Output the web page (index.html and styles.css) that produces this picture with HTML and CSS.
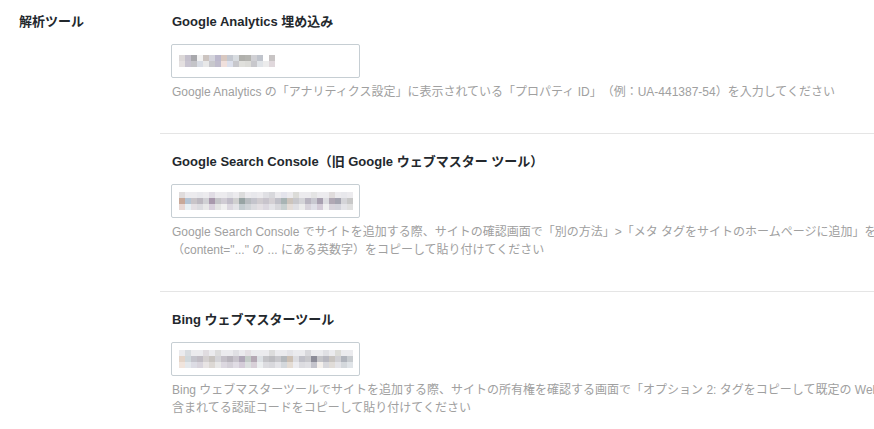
FILE: index.html
```html
<!DOCTYPE html>
<html lang="ja">
<head>
<meta charset="utf-8">
<title>解析ツール</title>
<link rel="stylesheet" href="styles.css">
</head>
<body>
<div class="row">
  <div class="row-label">解析ツール</div>
  <div class="row-body">
    <section class="field field-first">
      <h3 class="field-title">Google Analytics 埋め込み</h3>
      <div class="field-input">
        <svg width="102" height="12" viewBox="0 0 102 12" class="blur">
          <rect x="0" y="0" width="6" height="6" fill="#dcd8d8"/><rect x="6" y="0" width="6" height="6" fill="#c4c0cc"/><rect x="12" y="0" width="6" height="6" fill="#a8a8ac"/><rect x="18" y="0" width="6" height="6" fill="#f2f2f2"/><rect x="24" y="0" width="6" height="6" fill="#ccc4c0"/><rect x="30" y="0" width="6" height="6" fill="#d4d4dc"/><rect x="36" y="0" width="6" height="6" fill="#bcb8cc"/><rect x="42" y="0" width="6" height="6" fill="#d8c8c0"/><rect x="48" y="0" width="6" height="6" fill="#c4c8d0"/><rect x="54" y="0" width="6" height="6" fill="#d8dce0"/><rect x="60" y="0" width="6" height="6" fill="#b0b0ac"/><rect x="66" y="0" width="6" height="6" fill="#b4b4b0"/><rect x="72" y="0" width="6" height="6" fill="#d0d0d4"/><rect x="78" y="0" width="6" height="6" fill="#c0c4cc"/><rect x="84" y="0" width="6" height="6" fill="#ffffff"/><rect x="90" y="0" width="6" height="6" fill="#c8c4c4"/>
          <rect x="0" y="6" width="6" height="6" fill="#e4e0e0"/><rect x="6" y="6" width="6" height="6" fill="#c8c4d0"/><rect x="12" y="6" width="6" height="6" fill="#c4c4c8"/><rect x="18" y="6" width="6" height="6" fill="#d8dce4"/><rect x="24" y="6" width="6" height="6" fill="#e8e8e8"/><rect x="30" y="6" width="6" height="6" fill="#c8c8cc"/><rect x="36" y="6" width="6" height="6" fill="#c0bccc"/><rect x="42" y="6" width="6" height="6" fill="#f0e0dc"/><rect x="48" y="6" width="6" height="6" fill="#dce0ec"/><rect x="54" y="6" width="6" height="6" fill="#c8c8cc"/><rect x="60" y="6" width="6" height="6" fill="#e0e0dc"/><rect x="66" y="6" width="6" height="6" fill="#dcdcd8"/><rect x="72" y="6" width="6" height="6" fill="#c8c8cc"/><rect x="78" y="6" width="6" height="6" fill="#e0e4e8"/><rect x="84" y="6" width="6" height="6" fill="#ececec"/><rect x="90" y="6" width="6" height="6" fill="#e0d8dc"/>
        </svg>
      </div>
      <p class="field-desc">Google Analytics の「アナリティクス設定」に表示されている「プロパティ ID」（例：UA-441387-54）を入力してください</p>
    </section>
    <section class="field">
      <h3 class="field-title">Google Search Console（旧 Google ウェブマスター ツール）</h3>
      <div class="field-input">
        <svg width="174" height="18" viewBox="0 0 174 18" class="blur">
          <rect x="0" y="0" width="174" height="6" fill="#ecebee"/>
          <rect x="0" y="0" width="6" height="6" fill="#e0dcdc"/><rect x="18" y="0" width="6" height="6" fill="#e8e8ec"/><rect x="30" y="0" width="6" height="6" fill="#e0dce4"/><rect x="48" y="0" width="6" height="6" fill="#e4e4e8"/><rect x="60" y="0" width="6" height="6" fill="#dcdcdc"/><rect x="72" y="0" width="6" height="6" fill="#e8e8ec"/><rect x="84" y="0" width="6" height="6" fill="#e0e0e4"/><rect x="90" y="0" width="6" height="6" fill="#d8d8dc"/><rect x="102" y="0" width="6" height="6" fill="#e4e4ec"/><rect x="114" y="0" width="6" height="6" fill="#dcdcd8"/><rect x="132" y="0" width="6" height="6" fill="#e4e4e4"/><rect x="150" y="0" width="6" height="6" fill="#e0dcdc"/><rect x="162" y="0" width="6" height="6" fill="#e8e8ec"/>
          <rect x="0" y="6" width="6" height="6" fill="#c8a898"/><rect x="6" y="6" width="6" height="6" fill="#b4c4d4"/><rect x="12" y="6" width="6" height="6" fill="#c8c4c8"/><rect x="18" y="6" width="6" height="6" fill="#bcb8c0"/><rect x="24" y="6" width="6" height="6" fill="#d0d0d4"/><rect x="30" y="6" width="6" height="6" fill="#a898ac"/><rect x="36" y="6" width="6" height="6" fill="#c4c4c8"/><rect x="42" y="6" width="6" height="6" fill="#d0ccd4"/><rect x="48" y="6" width="6" height="6" fill="#c0bcc8"/><rect x="54" y="6" width="6" height="6" fill="#d0d0d0"/><rect x="60" y="6" width="6" height="6" fill="#98a4a4"/><rect x="66" y="6" width="6" height="6" fill="#b8bcc0"/><rect x="72" y="6" width="6" height="6" fill="#c4c4cc"/><rect x="78" y="6" width="6" height="6" fill="#d0ccd0"/><rect x="84" y="6" width="6" height="6" fill="#c8c4cc"/><rect x="90" y="6" width="6" height="6" fill="#d4d0d4"/><rect x="96" y="6" width="6" height="6" fill="#c0c0c8"/><rect x="102" y="6" width="6" height="6" fill="#a8b4b4"/><rect x="108" y="6" width="6" height="6" fill="#ccc4bc"/><rect x="114" y="6" width="6" height="6" fill="#c8c8cc"/><rect x="120" y="6" width="6" height="6" fill="#d4d4d8"/><rect x="126" y="6" width="6" height="6" fill="#b8b4c0"/><rect x="132" y="6" width="6" height="6" fill="#c8c8d0"/><rect x="138" y="6" width="6" height="6" fill="#a8a0b0"/><rect x="144" y="6" width="6" height="6" fill="#dcdce0"/><rect x="150" y="6" width="6" height="6" fill="#b0a8b4"/><rect x="156" y="6" width="6" height="6" fill="#a4a4b0"/><rect x="162" y="6" width="6" height="6" fill="#d4d4d8"/><rect x="168" y="6" width="6" height="6" fill="#c8c8c8"/>
          <rect x="0" y="12" width="6" height="6" fill="#e8d8d4"/><rect x="6" y="12" width="6" height="6" fill="#e8f0f4"/><rect x="12" y="12" width="6" height="6" fill="#e4e0e4"/><rect x="18" y="12" width="6" height="6" fill="#dcdce0"/><rect x="24" y="12" width="6" height="6" fill="#e8e8e8"/><rect x="30" y="12" width="6" height="6" fill="#d8d0dc"/><rect x="36" y="12" width="6" height="6" fill="#e4e4e4"/><rect x="42" y="12" width="6" height="6" fill="#f0f0f0"/><rect x="48" y="12" width="6" height="6" fill="#dcd8e0"/><rect x="54" y="12" width="6" height="6" fill="#e4e4e8"/><rect x="60" y="12" width="6" height="6" fill="#c4ccd0"/><rect x="66" y="12" width="6" height="6" fill="#d0d4d8"/><rect x="72" y="12" width="6" height="6" fill="#dcdce0"/><rect x="78" y="12" width="6" height="6" fill="#e4e0e4"/><rect x="84" y="12" width="6" height="6" fill="#dcd8e0"/><rect x="90" y="12" width="6" height="6" fill="#e4e4e8"/><rect x="96" y="12" width="6" height="6" fill="#d8d8dc"/><rect x="102" y="12" width="6" height="6" fill="#c8d0d0"/><rect x="108" y="12" width="6" height="6" fill="#e4ddd8"/><rect x="114" y="12" width="6" height="6" fill="#e0e0e4"/><rect x="120" y="12" width="6" height="6" fill="#ececec"/><rect x="126" y="12" width="6" height="6" fill="#d8d4dc"/><rect x="132" y="12" width="6" height="6" fill="#e0e0e8"/><rect x="138" y="12" width="6" height="6" fill="#d4ccd8"/><rect x="144" y="12" width="6" height="6" fill="#f0f0f0"/><rect x="150" y="12" width="6" height="6" fill="#d8d4dc"/><rect x="156" y="12" width="6" height="6" fill="#d4d4dc"/><rect x="162" y="12" width="6" height="6" fill="#e4e4e8"/><rect x="168" y="12" width="6" height="6" fill="#e0e0e0"/>
        </svg>
      </div>
      <p class="field-desc">Google Search Console でサイトを追加する際、サイトの確認画面で「別の方法」&gt;「メタ タグをサイトのホームページに追加」を選択して表示されたメタ タグの<br>（content="..." の ... にある英数字）をコピーして貼り付けてください</p>
    </section>
    <section class="field">
      <h3 class="field-title">Bing ウェブマスターツール</h3>
      <div class="field-input">
        <svg width="174" height="18" viewBox="0 0 174 18" class="blur">
          <rect x="0" y="0" width="174" height="6" fill="#ebebee"/>
          <rect x="6" y="0" width="6" height="6" fill="#d8dce0"/><rect x="24" y="0" width="6" height="6" fill="#e0dce0"/><rect x="36" y="0" width="6" height="6" fill="#dcdcdc"/><rect x="54" y="0" width="6" height="6" fill="#e0e0e4"/><rect x="66" y="0" width="6" height="6" fill="#e4e0e4"/><rect x="90" y="0" width="6" height="6" fill="#dcdcdc"/><rect x="108" y="0" width="6" height="6" fill="#e4e4e8"/><rect x="126" y="0" width="6" height="6" fill="#d8d8dc"/><rect x="144" y="0" width="6" height="6" fill="#e0e0e4"/><rect x="156" y="0" width="6" height="6" fill="#dcdcd8"/>
          <rect x="0" y="6" width="6" height="6" fill="#e4d4c8"/><rect x="6" y="6" width="6" height="6" fill="#d0d8dc"/><rect x="12" y="6" width="6" height="6" fill="#c4c4cc"/><rect x="18" y="6" width="6" height="6" fill="#c0bcc4"/><rect x="24" y="6" width="6" height="6" fill="#d4d0d0"/><rect x="30" y="6" width="6" height="6" fill="#c8c4c0"/><rect x="36" y="6" width="6" height="6" fill="#d4d4d8"/><rect x="42" y="6" width="6" height="6" fill="#c4c0c8"/><rect x="48" y="6" width="6" height="6" fill="#b8b4bc"/><rect x="54" y="6" width="6" height="6" fill="#c8c4cc"/><rect x="60" y="6" width="6" height="6" fill="#b0a8b8"/><rect x="66" y="6" width="6" height="6" fill="#c4ccc8"/><rect x="72" y="6" width="6" height="6" fill="#b4a8b4"/><rect x="78" y="6" width="6" height="6" fill="#dce0e4"/><rect x="84" y="6" width="6" height="6" fill="#c4c4c8"/><rect x="90" y="6" width="6" height="6" fill="#bcbcc0"/><rect x="96" y="6" width="6" height="6" fill="#c8c8cc"/><rect x="102" y="6" width="6" height="6" fill="#b4b8bc"/><rect x="108" y="6" width="6" height="6" fill="#ccc0b4"/><rect x="114" y="6" width="6" height="6" fill="#dcdce0"/><rect x="120" y="6" width="6" height="6" fill="#c0c0c8"/><rect x="126" y="6" width="6" height="6" fill="#c8c8cc"/><rect x="132" y="6" width="6" height="6" fill="#8c8c98"/><rect x="138" y="6" width="6" height="6" fill="#c4c4c8"/><rect x="144" y="6" width="6" height="6" fill="#b8b8c0"/><rect x="150" y="6" width="6" height="6" fill="#c8c4c0"/><rect x="156" y="6" width="6" height="6" fill="#d0d0d4"/><rect x="162" y="6" width="6" height="6" fill="#b0b4bc"/><rect x="168" y="6" width="6" height="6" fill="#c8ccd0"/>
          <rect x="0" y="12" width="6" height="6" fill="#f0e4dc"/><rect x="6" y="12" width="6" height="6" fill="#e4e8ec"/><rect x="12" y="12" width="6" height="6" fill="#dcdce4"/><rect x="18" y="12" width="6" height="6" fill="#d8d4dc"/><rect x="24" y="12" width="6" height="6" fill="#e8e4e4"/><rect x="30" y="12" width="6" height="6" fill="#dcd8d4"/><rect x="36" y="12" width="6" height="6" fill="#e8e8e8"/><rect x="42" y="12" width="6" height="6" fill="#dcd8e0"/><rect x="48" y="12" width="6" height="6" fill="#d4d0d8"/><rect x="54" y="12" width="6" height="6" fill="#e0dce4"/><rect x="60" y="12" width="6" height="6" fill="#d4ccd8"/><rect x="66" y="12" width="6" height="6" fill="#dce0e0"/><rect x="72" y="12" width="6" height="6" fill="#d8d0d8"/><rect x="78" y="12" width="6" height="6" fill="#eceff0"/><rect x="84" y="12" width="6" height="6" fill="#dcdce0"/><rect x="90" y="12" width="6" height="6" fill="#d8d8dc"/><rect x="96" y="12" width="6" height="6" fill="#e4e4e8"/><rect x="102" y="12" width="6" height="6" fill="#d4d8dc"/><rect x="108" y="12" width="6" height="6" fill="#e4dcd4"/><rect x="114" y="12" width="6" height="6" fill="#ececf0"/><rect x="120" y="12" width="6" height="6" fill="#dcdce0"/><rect x="126" y="12" width="6" height="6" fill="#e0e0e4"/><rect x="132" y="12" width="6" height="6" fill="#c4c4cc"/><rect x="138" y="12" width="6" height="6" fill="#f4f0ec"/><rect x="144" y="12" width="6" height="6" fill="#d8d8dc"/><rect x="150" y="12" width="6" height="6" fill="#e0dcd8"/><rect x="156" y="12" width="6" height="6" fill="#e4e4e8"/><rect x="162" y="12" width="6" height="6" fill="#d4d8dc"/><rect x="168" y="12" width="6" height="6" fill="#e0e4e8"/>
        </svg>
      </div>
      <p class="field-desc">Bing ウェブマスターツールでサイトを追加する際、サイトの所有権を確認する画面で「オプション 2: タグをコピーして既定の Web ページに貼り付ける」に<br>含まれてる認証コードをコピーして貼り付けてください</p>
    </section>
  </div>
</div>
</body>
</html>
```

FILE: styles.css
```css
html, body {
  margin: 0;
  padding: 0;
  background: #ffffff;
  overflow: hidden;
}

body {
  font-family: "Liberation Sans", Arial, "Noto Sans CJK JP", sans-serif;
  color: #23282d;
  width: 874px;
  height: 429px;
  text-spacing-trim: space-all;
}

.row {
  display: flex;
  align-items: flex-start;
}

.row-label {
  flex: 0 0 141px;
  padding: 13px 0 0 19px;
  font-size: 13px;
  line-height: 18px;
  font-weight: bold;
  color: #23282d;
}

.row-body {
  flex: 0 0 auto;
  width: 1100px;
}

.field {
  padding: 19px 0 32px 11px;
  border-bottom: 1px solid #e5e5e5;
}

.field-first {
  padding-top: 13px;
}

.field-title {
  margin: 0;
  font-size: 13px;
  line-height: 18px;
  font-weight: bold;
  color: #23282d;
  padding-left: 1px;
}

.field-input {
  margin-top: 13px;
  box-sizing: border-box;
  width: 189px;
  height: 34px;
  border: 1px solid #c6ced3;
  border-radius: 2px;
  background: #ffffff;
  display: flex;
  align-items: center;
  padding-left: 6px;
}

.blur {
  display: block;
  margin-left: 1px;
}

.field-desc {
  margin: 5px 0 0;
  padding-left: 1px;
  font-size: 12px;
  line-height: 18px;
  color: #a0a0a0;
  white-space: nowrap;
}
```
